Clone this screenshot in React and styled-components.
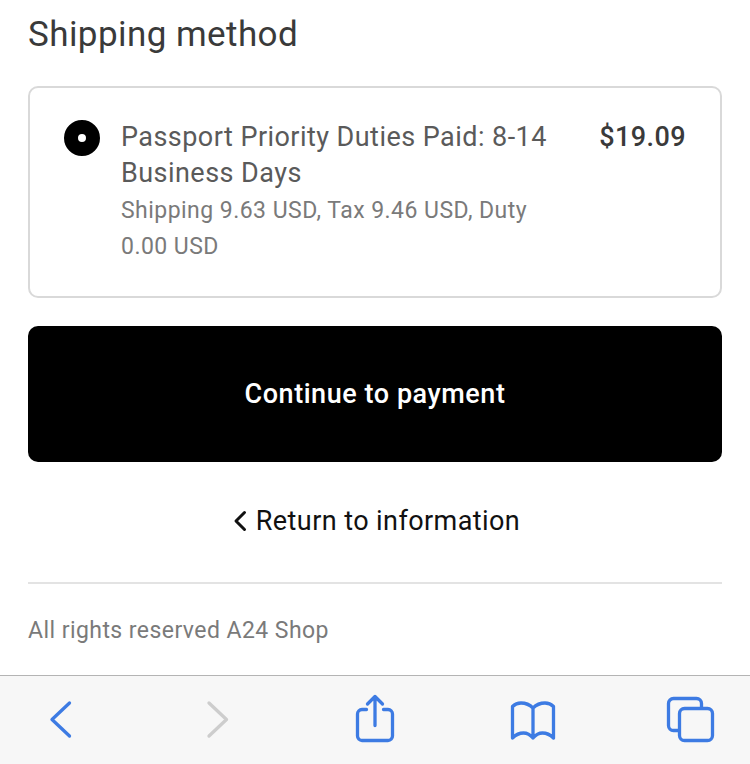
import React from "react";
import styled, { createGlobalStyle } from "styled-components";

const Global = createGlobalStyle`
  html, body { margin: 0; padding: 0; background: #fff; }
  body { font-family: Roboto, "Liberation Sans", sans-serif; }
  * { box-sizing: border-box; }
`;
const Page = styled.div`
  width: 750px; height: 764px; overflow: hidden;
  display: flex; flex-direction: column;
`;
const Content = styled.main`
  flex: 1; padding: 14px 28px 0; display: flex; flex-direction: column;
`;
const Heading = styled.h2`
  margin: 0; font-size: 35px; line-height: 42px; font-weight: 400; color: #3a3a3a;
  letter-spacing: 0.43px;
`;
const Card = styled.section`
  margin-top: 30px; height: 212px; border: 2px solid #d9d9d9; border-radius: 10px;
  padding: 31px 34px 0 34px; display: flex; align-items: flex-start;
`;
const Radio = styled.span`
  flex: none; width: 36px; height: 36px; border-radius: 50%;
  margin-top: 1px; border: 14px solid #000; background: #fff;
`;
const Details = styled.div`
  margin-left: 21px; width: 445px; flex: none;
`;
const Title = styled.div`
  font-size: 27px; line-height: 36px; color: #5a5a5a; letter-spacing: 0.45px;
`;
const Sub = styled.div`
  margin-top: 2px; font-size: 23px; line-height: 36px; color: #7a7a7a; letter-spacing: 0.46px;
`;
const Price = styled.div`
  margin-left: auto; font-size: 27px; line-height: 36px; font-weight: 500; color: #3a3a3a; letter-spacing: 0.4px;
`;
const Primary = styled.button`
  margin-top: 28px; height: 136px; width: 100%; border: 0; border-radius: 10px;
  background: #000; color: #fff; font: 500 27px Roboto, sans-serif; letter-spacing: 0.55px;
`;
const Back = styled.a`
  margin-top: 41px; height: 36px; display: flex; align-items: center; justify-content: center; gap: 9px;
  padding-left: 3px; font-size: 27px; color: #111; letter-spacing: 0.42px;
`;
const Divider = styled.hr`
  margin: 43px 0 0; border: 0; border-top: 2px solid #e3e3e3;
`;
const Footer = styled.p`
  margin: 31px 0 0; font-size: 23px; line-height: 32px; color: #7a7a7a; letter-spacing: 0.44px;
`;
const Toolbar = styled.nav`
  flex: none; height: 89px; background: #f7f7f7; border-top: 1px solid #b4b4b4;
  display: grid; grid-template-columns: 157px 149px 155px 156px 52px;
  padding: 19px 0 0 48px; align-items: start;
`;
const Icon = styled.svg`
  display: block; overflow: visible; fill: none; stroke: ${p => p.$off ? "#cdcdcd" : "#3d7be3"};
  stroke-width: 3.3; stroke-linecap: round; stroke-linejoin: round;
`;

export default function App() {
  return (
    <Page>
      <Global />
      <Content>
        <Heading>Shipping method</Heading>
        <Card>
          <Radio />
          <Details>
            <Title>Passport Priority Duties Paid: 8-14 Business Days</Title>
            <Sub>Shipping 9.63 USD, Tax 9.46 USD, Duty 0.00 USD</Sub>
          </Details>
          <Price>$19.09</Price>
        </Card>
        <Primary>Continue to payment</Primary>
        <Back>
          <svg width="14" height="22" viewBox="0 0 14 22" fill="none" stroke="#111" strokeWidth="3" strokeLinecap="round" strokeLinejoin="round"><path d="M11.5 2.5 3 11l8.5 8.5" /></svg>
          Return to information
        </Back>
        <Divider />
        <Footer>All rights reserved A24 Shop</Footer>
      </Content>
      <Toolbar>
        <Icon width="26" height="50" viewBox="0 0 26 50"><path d="M21.5 8 4 24.5 21.5 41" /></Icon>
        <Icon $off width="26" height="50" viewBox="0 0 26 50"><path d="M4 8l17.5 16.5L4 41" /></Icon>
        <Icon width="42" height="50" viewBox="0 0 42 50"><path d="M21 1.5v29M13.5 9 21 1.5 28.500 9M12.500 14.500H8a4.500 4.500 0 0 0-4.500 4.500v22A4.500 4.500 0 0 0 8 45.500h26a4.500 4.500 0 0 0 4.500-4.500V19a4.500 4.500 0 0 0-4.500-4.500h-4.500" /></Icon>
        <Icon width="48" height="50" viewBox="0 0 48 50"><path d="M24 13C21 10 17 8 12 8c-3 0-6 1-8.500 3.500V43c3-3 7-5 11-5 4 0 7 2 9.500 5 2.500-3 5.500-5 9.500-5 4 0 8 2 11 5V11.500C42 9 39 8 36 8c-5 0-9 2-12 5zM24 13v30" /></Icon>
        <Icon width="52" height="50" viewBox="0 0 52 50"><path d="M13 35.500H8.500a5 5 0 0 1-5-5V8.500a5 5 0 0 1 5-5h23a5 5 0 0 1 5 5V13" /><rect x="14.500" y="13.500" width="33" height="32" rx="5" /></Icon>
      </Toolbar>
    </Page>
  );
}
